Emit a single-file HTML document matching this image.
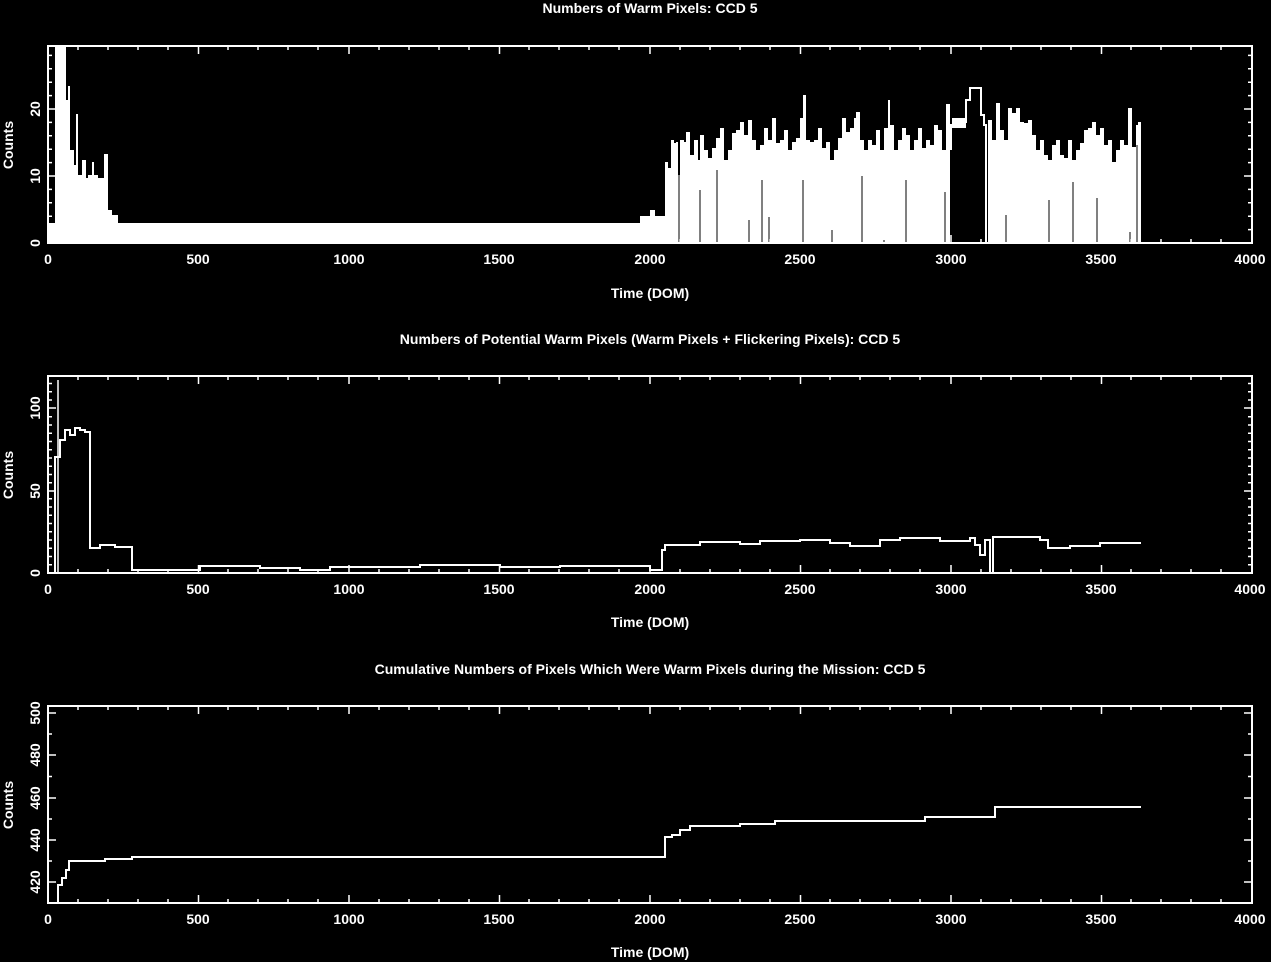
<!DOCTYPE html>
<html><head><meta charset="utf-8"><style>
html,body{margin:0;padding:0;background:#000;width:1271px;height:962px;overflow:hidden}
svg text{font-family:"Liberation Sans",sans-serif;font-size:14px;fill:#fff;font-weight:bold}
</style></head><body>
<svg width="1271" height="962" viewBox="0 0 1271 962" xmlns="http://www.w3.org/2000/svg">
<defs>
<g id="xt" stroke="#fff" stroke-width="1.5">
<path d="M48,0v-8M198.5,0v-8M349,0v-8M499.5,0v-8M650,0v-8M800.5,0v-8M951,0v-8M1101.5,0v-8"/>
<path d="M78,0v-4M108,0v-4M138,0v-4M168,0v-4M228,0v-4M258,0v-4M288,0v-4M318,0v-4M379,0v-4M409,0v-4M439,0v-4M469,0v-4M529,0v-4M559,0v-4M589,0v-4M619,0v-4M680,0v-4M710,0v-4M740,0v-4M770,0v-4M830,0v-4M860,0v-4M890,0v-4M920,0v-4M981,0v-4M1011,0v-4M1041,0v-4M1071,0v-4M1131,0v-4M1161,0v-4M1191,0v-4M1221,0v-4"/>
</g>
</defs>
<!-- Plot 1 -->
<text x="650" y="13" text-anchor="middle">Numbers of Warm Pixels: CCD 5</text>
<g fill="#fff">
<rect x="48" y="223" width="8" height="20"/>
<rect x="55" y="46" width="11" height="197"/>
<path d="M66,243V100H68V86H70V150H74V165H76V114H78V175H82V160H86V178H88V175H92V162H94V175H98V178H104V154H108V210H112V215H118V223H640V216H650V210H655V216H665V243Z"/>
<path d="M665,243V162H668V168H671V140H674V143H676V142H678V175H680V140H684V142H686V132H690V155H694V140H698V160H700V135H704V150H708V158H712V148H716V138H720V128H724V160H728V150H732V133H736V130H740V122H744V135H748V120H752V140H756V150H760V145H764V128H768V140H772V118H776V143H780V140H784V130H788V150H792V142H796V138H800V118H803V95H806V140H810V142H814V140H818V128H822V148H826V142H830V160H834V150H838V138H842V118H846V132H850V128H854V118H856V112H860V140H864V150H868V140H872V145H876V130H880V150H884V128H888V100H890V125H894V150H898V140H902V128H906V135H910V150H914V140H918V128H922V148H926V140H930V145H934V125H938V130H942V150H946V104H950V243Z"/>
<path d="M988,243V120H992V140H996V103H1000V130H1004V140H1008V108H1012V113H1016V108H1020V122H1024V123H1028V120H1032V135H1036V150H1040V140H1044V155H1048V160H1052V145H1056V140H1060V155H1064V158H1068V140H1072V160H1076V150H1080V143H1084V130H1088V128H1092V122H1096V135H1100V128H1104V145H1108V140H1112V162H1116V150H1120V140H1124V145H1128V108H1132V147H1136V125H1138V122H1141V243Z"/>
</g>
<path fill="none" stroke="#fff" stroke-width="2" d="M951,150V125H960V122H966V100H970V88H981V115H984V125H986V243"/>
<rect x="952" y="118" width="14" height="10" fill="#fff"/>
<g stroke="#000" stroke-width="1">
<path d="M679,243V120M700,243V190M717,243V170M749,243V220M762,243V180M769,243V217M803,243V180M832,243V230M862,243V176M884,243V240M906,243V180M945,243V192M1006,243V215M1049,243V200M1073,243V182M1097,243V198M1130,243V232M1137,243V145"/>
</g>
<rect x="48" y="46" width="1204" height="197" fill="none" stroke="#fff" stroke-width="2"/>
<use href="#xt" y="243"/><use href="#xt" transform="translate(0,46) scale(1,-1)"/>
<g stroke="#fff" stroke-width="1.5"><path d="M48,243h8M48,176h8M48,109h8M1252,243h-8M1252,176h-8M1252,109h-8"/>
<path d="M48,229.6h4M48,216.2h4M48,202.8h4M48,189.4h4M48,162.6h4M48,149.2h4M48,135.8h4M48,122.4h4M48,95.6h4M48,82.2h4M48,68.8h4M48,55.4h4M1252,229.6h-4M1252,216.2h-4M1252,202.8h-4M1252,189.4h-4M1252,162.6h-4M1252,149.2h-4M1252,135.8h-4M1252,122.4h-4M1252,95.6h-4M1252,82.2h-4M1252,68.8h-4M1252,55.4h-4"/></g>
<g text-anchor="middle"><text x="48" y="264">0</text><text x="198" y="264">500</text><text x="349" y="264">1000</text><text x="499" y="264">1500</text><text x="650" y="264">2000</text><text x="800" y="264">2500</text><text x="951" y="264">3000</text><text x="1101" y="264">3500</text><text x="1250" y="264">4000</text>
<text x="650" y="298">Time (DOM)</text></g>
<text transform="translate(40,243) rotate(-90)" text-anchor="middle">0</text>
<text transform="translate(40,176) rotate(-90)" text-anchor="middle">10</text>
<text transform="translate(40,109) rotate(-90)" text-anchor="middle">20</text>
<text transform="translate(13,145) rotate(-90)" text-anchor="middle">Counts</text>

<!-- Plot 2 -->
<text x="650" y="344" text-anchor="middle">Numbers of Potential Warm Pixels (Warm Pixels + Flickering Pixels): CCD 5</text>
<path fill="none" stroke="#fff" stroke-width="2" d="M48,573H55V457H60V440H65V430H70V435H75V428H80V430H85V432H90V548H100V545H115V547H132V570H200V566H260V568H300V570H330V567H420V565H500V567H560V566H650V570H662V550H665V545H700V542H740V544H760V541H800V540H830V543H850V546H880V540H900V538H940V541H970V538H975V545H980V555H985V540H990V573H993V537H1040V540H1048V548H1070V546H1100V543H1141"/>
<path fill="none" stroke="#fff" stroke-width="1.5" d="M58,380V573"/>
<rect x="48" y="376" width="1204" height="197" fill="none" stroke="#fff" stroke-width="2"/>
<use href="#xt" y="573"/><use href="#xt" transform="translate(0,376) scale(1,-1)"/>
<g stroke="#fff" stroke-width="1.5"><path d="M48,573h8M48,491h8M48,408h8M1252,573h-8M1252,491h-8M1252,408h-8"/>
<path d="M48,564.75h4M48,556.5h4M48,548.25h4M48,540h4M48,531.75h4M48,523.5h4M48,515.25h4M48,507h4M48,498.75h4M48,482.75h4M48,474.5h4M48,466.25h4M48,458h4M48,449.75h4M48,441.5h4M48,433.25h4M48,425h4M48,416.75h4M48,400h4M48,391.75h4M48,383.5h4M1252,564.75h-4M1252,556.5h-4M1252,548.25h-4M1252,540h-4M1252,531.75h-4M1252,523.5h-4M1252,515.25h-4M1252,507h-4M1252,498.75h-4M1252,482.75h-4M1252,474.5h-4M1252,466.25h-4M1252,458h-4M1252,449.75h-4M1252,441.5h-4M1252,433.25h-4M1252,425h-4M1252,416.75h-4M1252,400h-4M1252,391.75h-4M1252,383.5h-4"/></g>
<g text-anchor="middle"><text x="48" y="594">0</text><text x="198" y="594">500</text><text x="349" y="594">1000</text><text x="499" y="594">1500</text><text x="650" y="594">2000</text><text x="800" y="594">2500</text><text x="951" y="594">3000</text><text x="1101" y="594">3500</text><text x="1250" y="594">4000</text>
<text x="650" y="627">Time (DOM)</text></g>
<text transform="translate(40,573) rotate(-90)" text-anchor="middle">0</text>
<text transform="translate(40,491) rotate(-90)" text-anchor="middle">50</text>
<text transform="translate(40,408) rotate(-90)" text-anchor="middle">100</text>
<text transform="translate(13,475) rotate(-90)" text-anchor="middle">Counts</text>

<!-- Plot 3 -->
<text x="650" y="674" text-anchor="middle">Cumulative Numbers of Pixels Which Were Warm Pixels during the Mission: CCD 5</text>
<path fill="none" stroke="#fff" stroke-width="2" d="M48,903H58V885H62V878H66V870H69V861H105V859H132V857H665V837H672V835H680V830H690V826H740V824H775V821H925V817H995V807H1141"/>
<rect x="48" y="706" width="1204" height="197" fill="none" stroke="#fff" stroke-width="2"/>
<use href="#xt" y="903"/><use href="#xt" transform="translate(0,706) scale(1,-1)"/>
<g stroke="#fff" stroke-width="1.5"><path d="M48,882h8M48,840h8M48,798h8M48,755h8M48,713h8M1252,882h-8M1252,840h-8M1252,798h-8M1252,755h-8M1252,713h-8"/>
<path d="M48,861h4M48,819h4M48,776.5h4M48,734h4M1252,861h-4M1252,819h-4M1252,776.5h-4M1252,734h-4"/></g>
<g text-anchor="middle"><text x="48" y="924">0</text><text x="198" y="924">500</text><text x="349" y="924">1000</text><text x="499" y="924">1500</text><text x="650" y="924">2000</text><text x="800" y="924">2500</text><text x="951" y="924">3000</text><text x="1101" y="924">3500</text><text x="1250" y="924">4000</text>
<text x="650" y="957">Time (DOM)</text></g>
<text transform="translate(40,882) rotate(-90)" text-anchor="middle">420</text>
<text transform="translate(40,840) rotate(-90)" text-anchor="middle">440</text>
<text transform="translate(40,798) rotate(-90)" text-anchor="middle">460</text>
<text transform="translate(40,755) rotate(-90)" text-anchor="middle">480</text>
<text transform="translate(40,713) rotate(-90)" text-anchor="middle">500</text>
<text transform="translate(13,805) rotate(-90)" text-anchor="middle">Counts</text>
</svg>
</body></html>
